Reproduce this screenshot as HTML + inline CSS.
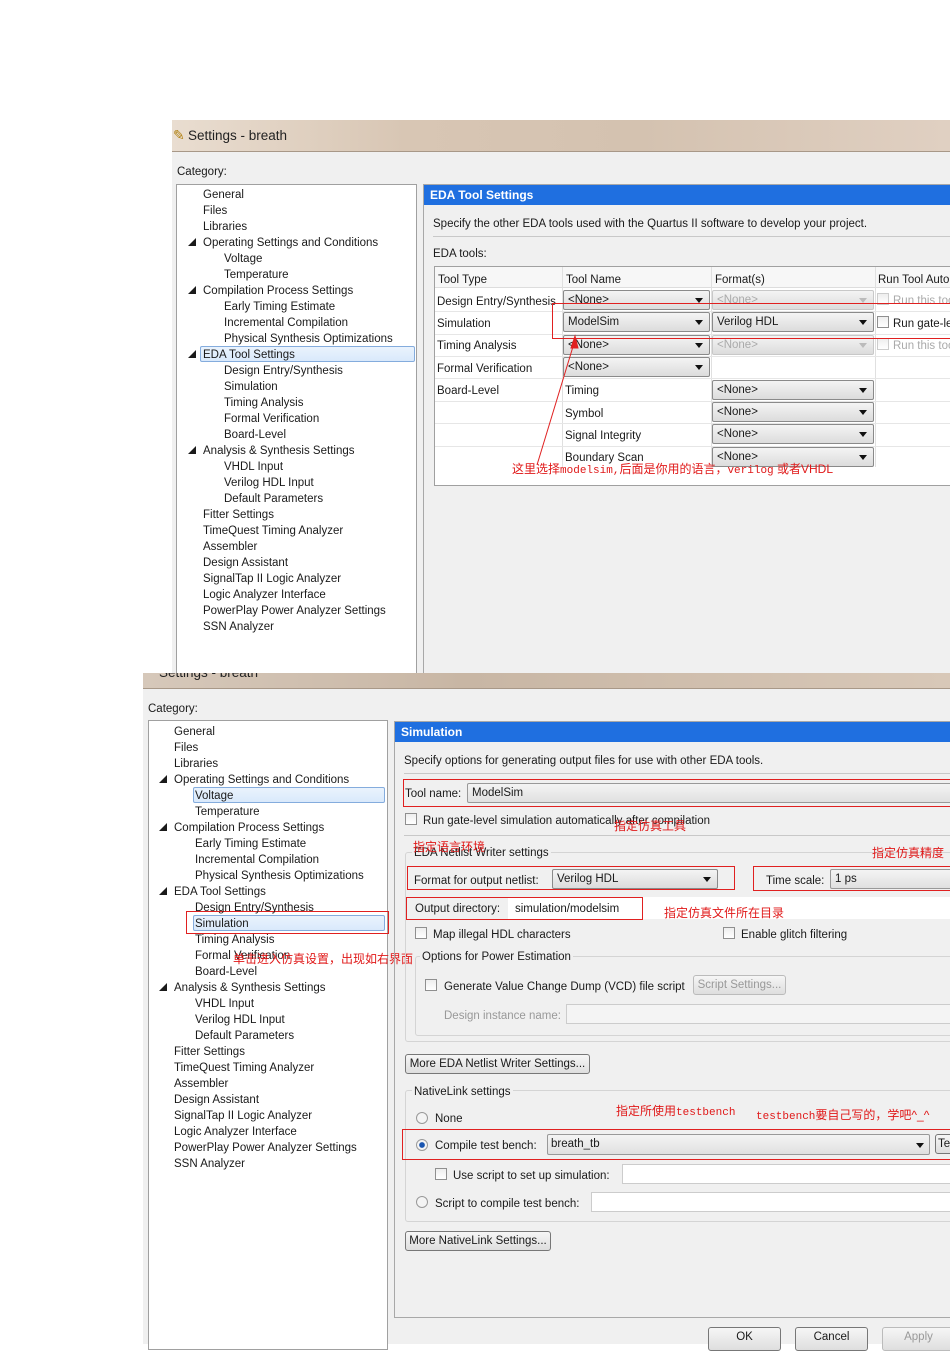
<!DOCTYPE html>
<html><head><meta charset="utf-8">
<style>
*{margin:0;padding:0;box-sizing:border-box}
body{width:950px;height:1344px;background:#fff;position:relative;overflow:hidden;font-family:"Liberation Sans","Noto Sans CJK SC",sans-serif;font-size:11.5px;color:#1a1a1a}
.a{position:absolute;white-space:nowrap}
.t{position:absolute;white-space:nowrap;line-height:14px;font-size:11.5px;margin-top:1px}
.hdr{position:absolute;background:#1f6fe0;color:#fff;font-weight:bold;font-size:12px;line-height:20px;padding-left:6px}
.cb{position:absolute;height:20px;border:1px solid #8a8a8a;border-radius:2px;background:linear-gradient(#f4f4f4,#dcdcdc);font-size:11.5px;line-height:19px;padding-left:4px;white-space:nowrap;overflow:hidden}
.cb:after{content:"";position:absolute;right:6px;top:7px;border-left:4px solid transparent;border-right:4px solid transparent;border-top:5px solid #111}
.cb.dis{color:#aaa;border-color:#c8c8c8}
.cb.dis:after{border-top-color:#bbb}
.red{position:absolute;border:1px solid #e02020}
.rt{position:absolute;color:#e01818;white-space:nowrap;font-size:12px;line-height:14px}
.chk{position:absolute;width:12px;height:12px;border:1px solid #8f8f8f;background:linear-gradient(#eee,#fff)}
.rad{position:absolute;width:12px;height:12px;border:1px solid #999;border-radius:50%;background:#f4f4f4}
.btn{position:absolute;height:20px;border:1px solid #777;border-radius:3px;background:linear-gradient(#f6f6f6,#dedede);font-size:11.5px;line-height:19px;text-align:center}
.inp{position:absolute;height:20px;border:1px solid #b4b4b4;background:#fff}
.sel{position:absolute;height:16px;border:1px solid #84acdd;border-radius:2px;background:linear-gradient(#eaf3fd,#d9e9fb)}
</style></head><body>

<!-- ===== Window 1 ===== -->
<div class="a" style="left:172px;top:120px;width:778px;height:553px;background:#f0f0f0"></div>
<div class="a" style="left:172px;top:120px;width:778px;height:32px;background:linear-gradient(90deg,#e9ddd0,#d8c6b4 30%,#d4c2b0 60%,#e0d0c2);border-bottom:1px solid #a89888"></div>
<div class="a" style="left:173px;top:127px;font-size:14px;color:#b08010">✎</div>
<div class="a" style="left:188px;top:128px;font-size:13.5px;color:#222">Settings - breath</div>
<div class="t" style="left:177px;top:164px">Category:</div>
<div class="a" style="left:176px;top:184px;width:241px;height:489px;background:#fff;border:1px solid #a0a0a0;border-bottom:none"></div>
<div class="sel" style="left:200px;top:346px;width:215px"></div>

<div class="t" style="left:203px;top:187px">General</div>
<div class="t" style="left:203px;top:203px">Files</div>
<div class="t" style="left:203px;top:219px">Libraries</div>
<div class="t" style="left:188px;top:235px;font-size:8px">◢</div><div class="t" style="left:203px;top:235px">Operating Settings and Conditions</div>
<div class="t" style="left:224px;top:251px">Voltage</div>
<div class="t" style="left:224px;top:267px">Temperature</div>
<div class="t" style="left:188px;top:283px;font-size:8px">◢</div><div class="t" style="left:203px;top:283px">Compilation Process Settings</div>
<div class="t" style="left:224px;top:299px">Early Timing Estimate</div>
<div class="t" style="left:224px;top:315px">Incremental Compilation</div>
<div class="t" style="left:224px;top:331px">Physical Synthesis Optimizations</div>
<div class="t" style="left:188px;top:347px;font-size:8px">◢</div><div class="t" style="left:203px;top:347px">EDA Tool Settings</div>
<div class="t" style="left:224px;top:363px">Design Entry/Synthesis</div>
<div class="t" style="left:224px;top:379px">Simulation</div>
<div class="t" style="left:224px;top:395px">Timing Analysis</div>
<div class="t" style="left:224px;top:411px">Formal Verification</div>
<div class="t" style="left:224px;top:427px">Board-Level</div>
<div class="t" style="left:188px;top:443px;font-size:8px">◢</div><div class="t" style="left:203px;top:443px">Analysis &amp; Synthesis Settings</div>
<div class="t" style="left:224px;top:459px">VHDL Input</div>
<div class="t" style="left:224px;top:475px">Verilog HDL Input</div>
<div class="t" style="left:224px;top:491px">Default Parameters</div>
<div class="t" style="left:203px;top:507px">Fitter Settings</div>
<div class="t" style="left:203px;top:523px">TimeQuest Timing Analyzer</div>
<div class="t" style="left:203px;top:539px">Assembler</div>
<div class="t" style="left:203px;top:555px">Design Assistant</div>
<div class="t" style="left:203px;top:571px">SignalTap II Logic Analyzer</div>
<div class="t" style="left:203px;top:587px">Logic Analyzer Interface</div>
<div class="t" style="left:203px;top:603px">PowerPlay Power Analyzer Settings</div>
<div class="t" style="left:203px;top:619px">SSN Analyzer</div>

<div class="a" style="left:423px;top:184px;width:530px;height:489px;border:1px solid #a8a8a8;border-bottom:none"></div>
<div class="hdr" style="left:424px;top:185px;width:526px">EDA Tool Settings</div>
<div class="t" style="left:433px;top:216px">Specify the other EDA tools used with the Quartus II software to develop your project.</div>
<div class="a" style="left:433px;top:236px;width:517px;height:1px;background:#c8c8c8"></div>
<div class="t" style="left:433px;top:246px">EDA tools:</div>
<div class="a" style="left:434px;top:266px;width:520px;height:220px;background:#fff;border:1px solid #a0a0a0"></div>
<div class="a" style="left:435px;top:267px;width:515px;height:21px;background:#f7f7f7;border-bottom:1px solid #ddd"></div>
<div class="a" style="left:562px;top:267px;width:1px;height:200px;background:#e0e0e0"></div>
<div class="a" style="left:711px;top:267px;width:1px;height:200px;background:#e0e0e0"></div>
<div class="a" style="left:875px;top:267px;width:1px;height:200px;background:#e0e0e0"></div>
<div class="a" style="left:435px;top:311px;width:515px;height:1px;background:#e6e6e6"></div>
<div class="a" style="left:435px;top:334px;width:515px;height:1px;background:#e6e6e6"></div>
<div class="a" style="left:435px;top:356px;width:515px;height:1px;background:#e6e6e6"></div>
<div class="a" style="left:435px;top:378px;width:515px;height:1px;background:#e6e6e6"></div>
<div class="a" style="left:435px;top:401px;width:515px;height:1px;background:#e6e6e6"></div>
<div class="a" style="left:435px;top:423px;width:515px;height:1px;background:#e6e6e6"></div>
<div class="a" style="left:435px;top:446px;width:515px;height:1px;background:#e6e6e6"></div>
<div class="t" style="left:438px;top:272px">Tool Type</div>
<div class="t" style="left:566px;top:272px">Tool Name</div>
<div class="t" style="left:715px;top:272px">Format(s)</div>
<div class="t" style="left:878px;top:272px">Run Tool Automatically</div>
<div class="t" style="left:437px;top:294px">Design Entry/Synthesis</div>
<div class="t" style="left:437px;top:316px">Simulation</div>
<div class="t" style="left:437px;top:338px">Timing Analysis</div>
<div class="t" style="left:437px;top:361px">Formal Verification</div>
<div class="t" style="left:437px;top:383px">Board-Level</div>
<div class="t" style="left:565px;top:383px">Timing</div>
<div class="t" style="left:565px;top:406px">Symbol</div>
<div class="t" style="left:565px;top:428px">Signal Integrity</div>
<div class="t" style="left:565px;top:450px">Boundary Scan</div>
<div class="cb" style="left:563px;top:290px;width:147px">&lt;None&gt;</div>
<div class="cb" style="left:563px;top:312px;width:147px">ModelSim</div>
<div class="cb" style="left:563px;top:335px;width:147px">&lt;None&gt;</div>
<div class="cb" style="left:563px;top:357px;width:147px">&lt;None&gt;</div>
<div class="cb dis" style="left:712px;top:290px;width:162px">&lt;None&gt;</div>
<div class="cb" style="left:712px;top:312px;width:162px">Verilog HDL</div>
<div class="cb dis" style="left:712px;top:335px;width:162px">&lt;None&gt;</div>
<div class="cb" style="left:712px;top:380px;width:162px">&lt;None&gt;</div>
<div class="cb" style="left:712px;top:402px;width:162px">&lt;None&gt;</div>
<div class="cb" style="left:712px;top:424px;width:162px">&lt;None&gt;</div>
<div class="cb" style="left:712px;top:447px;width:162px">&lt;None&gt;</div>
<div class="chk" style="left:877px;top:293px;border-color:#ccc"></div><div class="t" style="left:893px;top:293px;color:#aaa">Run this tool</div>
<div class="chk" style="left:877px;top:316px"></div><div class="t" style="left:893px;top:316px">Run gate-level</div>
<div class="chk" style="left:877px;top:338px;border-color:#ccc"></div><div class="t" style="left:893px;top:338px;color:#aaa">Run this tool</div>
<div class="red" style="left:552px;top:303px;width:400px;height:36px"></div>
<svg class="a" style="left:0;top:0" width="950" height="1344">
<g stroke="#e02020" fill="#e02020" stroke-width="1">
<line x1="537" y1="465" x2="575" y2="340"/><polygon points="575,336 571,348 578,348"/>
<line x1="690" y1="815" x2="735" y2="792"/><polygon points="738,789 728,792 732,798"/>
<line x1="490" y1="852" x2="530" y2="875"/><polygon points="535,878 525,870 522,876"/>
<line x1="640" y1="910" x2="665" y2="913"/><polygon points="622,907 636,903 636,912"/>
<line x1="640" y1="908" x2="660" y2="908"/>
<line x1="895" y1="860" x2="882" y2="876"/><polygon points="878,880 882,868 888,874"/>
<line x1="300" y1="958" x2="293" y2="935"/><polygon points="291,929 288,942 297,940"/>
<line x1="335" y1="983" x2="400" y2="1005"/><polygon points="405,1008 393,998 392,1007"/>
<line x1="728" y1="1118" x2="730" y2="1133"/><polygon points="730,1142 725,1130 735,1130"/>
</g></svg>
<div class="rt" style="left:512px;top:462px">这里选择<span style="font-family:'Liberation Mono',monospace;font-size:11px">modelsim,</span>后面是你用的语言，<span style="font-family:'Liberation Mono',monospace;font-size:11px">verilog</span> 或者VHDL</div>

<!-- ===== Window 2 ===== -->
<div class="a" style="left:143px;top:673px;width:807px;height:671px;background:#f0f0f0"></div>
<div class="a" style="left:143px;top:673px;width:807px;height:16px;background:linear-gradient(90deg,#d6c8ba,#c8b6a4 40%,#d8c8b8);border-bottom:1px solid #a89888;overflow:hidden"><div class="a" style="left:16px;top:-8px;font-size:13.5px;color:#222">Settings - breath</div></div>
<div class="t" style="left:148px;top:701px">Category:</div>
<div class="a" style="left:148px;top:720px;width:240px;height:630px;background:#fff;border:1px solid #a0a0a0"></div>
<div class="sel" style="left:193px;top:787px;width:192px"></div>
<div class="sel" style="left:193px;top:915px;width:192px"></div>
<div class="red" style="left:186px;top:911px;width:203px;height:23px"></div>

<div class="t" style="left:174px;top:724px">General</div>
<div class="t" style="left:174px;top:740px">Files</div>
<div class="t" style="left:174px;top:756px">Libraries</div>
<div class="t" style="left:159px;top:772px;font-size:8px">◢</div><div class="t" style="left:174px;top:772px">Operating Settings and Conditions</div>
<div class="t" style="left:195px;top:788px">Voltage</div>
<div class="t" style="left:195px;top:804px">Temperature</div>
<div class="t" style="left:159px;top:820px;font-size:8px">◢</div><div class="t" style="left:174px;top:820px">Compilation Process Settings</div>
<div class="t" style="left:195px;top:836px">Early Timing Estimate</div>
<div class="t" style="left:195px;top:852px">Incremental Compilation</div>
<div class="t" style="left:195px;top:868px">Physical Synthesis Optimizations</div>
<div class="t" style="left:159px;top:884px;font-size:8px">◢</div><div class="t" style="left:174px;top:884px">EDA Tool Settings</div>
<div class="t" style="left:195px;top:900px">Design Entry/Synthesis</div>
<div class="t" style="left:195px;top:916px">Simulation</div>
<div class="t" style="left:195px;top:932px">Timing Analysis</div>
<div class="t" style="left:195px;top:948px">Formal Verification</div>
<div class="t" style="left:195px;top:964px">Board-Level</div>
<div class="t" style="left:159px;top:980px;font-size:8px">◢</div><div class="t" style="left:174px;top:980px">Analysis &amp; Synthesis Settings</div>
<div class="t" style="left:195px;top:996px">VHDL Input</div>
<div class="t" style="left:195px;top:1012px">Verilog HDL Input</div>
<div class="t" style="left:195px;top:1028px">Default Parameters</div>
<div class="t" style="left:174px;top:1044px">Fitter Settings</div>
<div class="t" style="left:174px;top:1060px">TimeQuest Timing Analyzer</div>
<div class="t" style="left:174px;top:1076px">Assembler</div>
<div class="t" style="left:174px;top:1092px">Design Assistant</div>
<div class="t" style="left:174px;top:1108px">SignalTap II Logic Analyzer</div>
<div class="t" style="left:174px;top:1124px">Logic Analyzer Interface</div>
<div class="t" style="left:174px;top:1140px">PowerPlay Power Analyzer Settings</div>
<div class="t" style="left:174px;top:1156px">SSN Analyzer</div>
<div class="rt" style="left:233px;top:952px">单击进入仿真设置，出现如右界面</div>

<div class="a" style="left:394px;top:721px;width:560px;height:597px;border:1px solid #a8a8a8"></div>
<div class="hdr" style="left:395px;top:722px;width:555px">Simulation</div>
<div class="t" style="left:404px;top:753px">Specify options for generating output files for use with other EDA tools.</div>
<div class="a" style="left:404px;top:773px;width:546px;height:1px;background:#c8c8c8"></div>
<div class="red" style="left:403px;top:779px;width:550px;height:28px"></div>
<div class="t" style="left:405px;top:786px">Tool name:</div>
<div class="a" style="left:467px;top:783px;width:490px;height:20px;border:1px solid #999;border-radius:2px;background:linear-gradient(#f4f4f4,#e0e0e0);line-height:19px;padding-left:4px">ModelSim</div>
<div class="chk" style="left:405px;top:813px"></div><div class="t" style="left:423px;top:813px">Run gate-level simulation automatically after compilation</div>
<div class="rt" style="left:614px;top:819px">指定仿真工具</div>
<div class="a" style="left:404px;top:835px;width:546px;height:1px;background:#c8c8c8"></div>
<div class="a" style="left:405px;top:852px;width:550px;height:190px;border:1px solid #d4d4d4;border-radius:3px"></div>
<div class="t" style="left:412px;top:845px;background:#f0f0f0;padding:0 2px">EDA Netlist Writer settings</div>
<div class="rt" style="left:413px;top:840px">指定语言环境</div>
<div class="rt" style="left:872px;top:846px">指定仿真精度</div>
<div class="red" style="left:407px;top:866px;width:328px;height:24px"></div>
<div class="t" style="left:414px;top:873px">Format for output netlist:</div>
<div class="cb" style="left:552px;top:869px;width:166px">Verilog HDL</div>
<div class="red" style="left:753px;top:866px;width:200px;height:25px"></div>
<div class="t" style="left:766px;top:873px">Time scale:</div>
<div class="a" style="left:830px;top:869px;width:130px;height:20px;border:1px solid #999;border-radius:2px;background:linear-gradient(#f4f4f4,#e0e0e0);line-height:19px;padding-left:4px">1 ps</div>
<div class="a" style="left:508px;top:897px;width:442px;height:22px;background:#fff"></div>
<div class="red" style="left:406px;top:897px;width:237px;height:23px"></div>
<div class="t" style="left:415px;top:901px">Output directory:</div>
<div class="t" style="left:515px;top:901px">simulation/modelsim</div>
<div class="rt" style="left:664px;top:906px">指定仿真文件所在目录</div>
<div class="chk" style="left:415px;top:927px"></div><div class="t" style="left:433px;top:927px">Map illegal HDL characters</div>
<div class="chk" style="left:723px;top:927px"></div><div class="t" style="left:741px;top:927px">Enable glitch filtering</div>
<div class="a" style="left:415px;top:956px;width:540px;height:80px;border:1px solid #d4d4d4;border-radius:3px"></div>
<div class="t" style="left:420px;top:949px;background:#f0f0f0;padding:0 2px">Options for Power Estimation</div>
<div class="chk" style="left:425px;top:979px"></div><div class="t" style="left:444px;top:979px">Generate Value Change Dump (VCD) file script</div>
<div class="btn" style="left:693px;top:975px;width:93px;color:#999;border-color:#bbb">Script Settings...</div>
<div class="t" style="left:444px;top:1008px;color:#999">Design instance name:</div>
<div class="inp" style="left:566px;top:1004px;width:390px;border-color:#ccc;background:#f4f4f4"></div>
<div class="btn" style="left:405px;top:1054px;width:185px">More EDA Netlist Writer Settings...</div>
<div class="a" style="left:405px;top:1090px;width:550px;height:132px;border:1px solid #d4d4d4;border-radius:3px"></div>
<div class="t" style="left:412px;top:1084px;background:#f0f0f0;padding:0 2px">NativeLink settings</div>
<div class="rad" style="left:416px;top:1112px"></div><div class="t" style="left:435px;top:1111px">None</div>
<div class="rt" style="left:616px;top:1104px">指定所使用<span style="font-family:'Liberation Mono',monospace;font-size:11px">testbench</span></div>
<div class="rt" style="left:756px;top:1108px"><span style="font-family:'Liberation Mono',monospace;font-size:11px">testbench</span>要自己写的，学吧^_^</div>
<div class="red" style="left:402px;top:1129px;width:552px;height:31px"></div>
<div class="rad" style="left:416px;top:1139px;background:radial-gradient(circle,#1a55b0 35%,#f4f4f4 45%)"></div><div class="t" style="left:435px;top:1138px">Compile test bench:</div>
<div class="a" style="left:547px;top:1134px;width:383px;height:21px;border:1px solid #999;border-radius:2px;background:linear-gradient(#f4f4f4,#e0e0e0);line-height:19px;padding-left:3px">breath_tb</div>
<div class="a" style="left:916px;top:1143px;border-left:4px solid transparent;border-right:4px solid transparent;border-top:5px solid #111"></div>
<div class="btn" style="left:935px;top:1134px;width:30px;text-align:left;padding-left:2px">Te</div>
<div class="chk" style="left:435px;top:1168px"></div><div class="t" style="left:453px;top:1168px">Use script to set up simulation:</div>
<div class="inp" style="left:622px;top:1164px;width:330px;border-color:#ccc"></div>
<div class="rad" style="left:416px;top:1196px"></div><div class="t" style="left:435px;top:1196px">Script to compile test bench:</div>
<div class="inp" style="left:591px;top:1192px;width:360px;border-color:#ccc"></div>
<div class="btn" style="left:405px;top:1231px;width:146px">More NativeLink Settings...</div>
<div class="btn" style="left:708px;top:1327px;width:73px;height:24px">OK</div>
<div class="btn" style="left:795px;top:1327px;width:73px;height:24px">Cancel</div>
<div class="btn" style="left:882px;top:1327px;width:73px;height:24px;color:#999;border-color:#bbb">Apply</div>
</body></html>
